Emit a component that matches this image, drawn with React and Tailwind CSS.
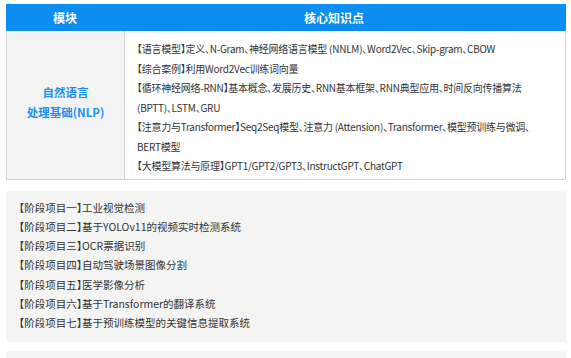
const font = { fontFamily: '"Noto Sans CJK SC", "Noto Sans", sans-serif' };
const halt = { fontFeatureSettings: '"halt"' };

const knowledge = [
  "【语言模型】定义、N-Gram、神经网络语言模型 (NNLM)、Word2Vec、Skip-gram、CBOW",
  "【综合案例】利用Word2Vec训练词向量",
  "【循环神经网络-RNN】基本概念、发展历史、RNN基本框架、RNN典型应用、时间反向传播算法 (BPTT)、LSTM、GRU",
  "【注意力与Transformer】Seq2Seq模型、注意力 (Attension)、Transformer、模型预训练与微调、BERT模型",
  "【大模型算法与原理】GPT1/GPT2/GPT3、InstructGPT、ChatGPT",
];

const projects = [
  "【阶段项目一】工业视觉检测",
  "【阶段项目二】基于YOLOv11的视频实时检测系统",
  "【阶段项目三】OCR票据识别",
  "【阶段项目四】自动驾驶场景图像分割",
  "【阶段项目五】医学影像分析",
  "【阶段项目六】基于Transformer的翻译系统",
  "【阶段项目七】基于预训练模型的关键信息提取系统",
];

export default function App() {
  return (
    <div className="min-h-[358px] bg-white px-[6px] pt-[4px]" style={font}>
      <div className="w-[560px]">
        <div className="grid h-[27px] grid-cols-[118px_1fr] bg-[#0b8df2] text-[12px] font-bold text-white">
          <div className="flex items-center justify-center">模块</div>
          <div className="flex items-center justify-center pr-[22px]">核心知识点</div>
        </div>
        <div className="grid grid-cols-[118px_1fr] border-x border-b border-[#d3d3d3]">
          <div className="flex flex-col items-center justify-center border-r border-[#d3d3d3] bg-[#f4f4f4] pb-[5px] text-[11.5px] font-bold leading-[20px] text-[#1d8ff0]">
            <span>自然语言</span>
            <span>处理基础(NLP)</span>
          </div>
          <div
            className="w-[420px] pb-[3px] pl-[12px] pt-[8px] text-[10px] leading-[19.5px] tracking-[-0.25px] text-[#333]"
            style={halt}
          >
            {knowledge.map((line) => (
              <p key={line}>{line}</p>
            ))}
          </div>
        </div>

        <div
          className="mt-[11px] bg-[#f4f4f3] pb-[9px] pl-[13px] pt-[7px] text-[10.5px] leading-[19.3px] text-[#333]"
          style={halt}
        >
          {projects.map((line) => (
            <p key={line}>{line}</p>
          ))}
        </div>

        <div className="mt-[9px] h-[12px] bg-[#f4f4f3]" />
      </div>
    </div>
  );
}
